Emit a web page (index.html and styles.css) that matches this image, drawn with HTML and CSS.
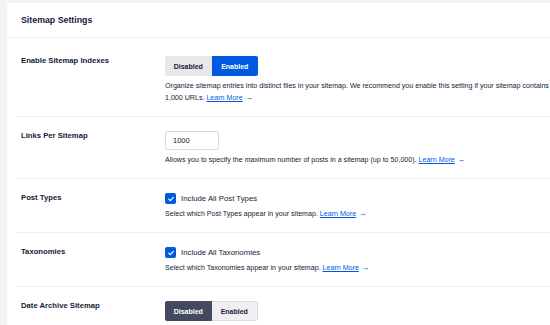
FILE: index.html
```html
<!DOCTYPE html>
<html>
<head>
<meta charset="utf-8">
<link rel="stylesheet" href="styles.css">
</head>
<body>
<div class="page">
  <div class="card">
    <div class="card-header">Sitemap Settings</div>
    <div class="card-body">
      <div class="row">
        <div class="label">Enable Sitemap Indexes</div>
        <div class="field">
          <div class="toggle">
            <span class="btn btn-off">Disabled</span><span class="btn btn-blue">Enabled</span>
          </div>
          <p class="desc desc-wide">Organize sitemap entries into distinct files in your sitemap. We recommend you enable this setting if your sitemap contains <span class="more-wrap">1,000 URLs. <a class="more" href="#">Learn More</a><span class="arrow">→</span></span></p>
        </div>
      </div>
      <div class="row">
        <div class="label">Links Per Sitemap</div>
        <div class="field">
          <div class="input">1000</div>
          <p class="desc">Allows you to specify the maximum number of posts in a sitemap (up to 50,000). <span class="more-wrap"><a class="more" href="#">Learn More</a><span class="arrow">→</span></span></p>
        </div>
      </div>
      <div class="row">
        <div class="label">Post Types</div>
        <div class="field">
          <div class="check-line"><span class="checkbox"><svg viewBox="0 0 10 10" width="8" height="8"><path d="M2.2 5.2 L4.2 7.1 L7.9 3" fill="none" stroke="#fff" stroke-width="1.5" stroke-linecap="round" stroke-linejoin="round"/></svg></span>Include All Post Types</div>
          <p class="desc">Select which Post Types appear in your sitemap. <span class="more-wrap"><a class="more" href="#">Learn More</a><span class="arrow">→</span></span></p>
        </div>
      </div>
      <div class="row">
        <div class="label">Taxonomies</div>
        <div class="field">
          <div class="check-line"><span class="checkbox"><svg viewBox="0 0 10 10" width="8" height="8"><path d="M2.2 5.2 L4.2 7.1 L7.9 3" fill="none" stroke="#fff" stroke-width="1.5" stroke-linecap="round" stroke-linejoin="round"/></svg></span>Include All Taxonomies</div>
          <p class="desc">Select which Taxonomies appear in your sitemap. <span class="more-wrap"><a class="more" href="#">Learn More</a><span class="arrow">→</span></span></p>
        </div>
      </div>
      <div class="row">
        <div class="label">Date Archive Sitemap</div>
        <div class="field">
          <div class="toggle">
            <span class="btn btn-dark">Disabled</span><span class="btn btn-light">Enabled</span>
          </div>
        </div>
      </div>
    </div>
  </div>
</div>
</body>
</html>
```
FILE: styles.css
```css
html, body {
  margin: 0;
  padding: 0;
}
body {
  background: #f2f3f5;
  font-family: "Liberation Sans", Arial, sans-serif;
  color: #141b38;
  overflow: hidden;
  width: 550px;
  height: 325px;
}
.page {
  padding: 3px 0 0 7px;
  height: 322px;
  overflow: hidden;
}
.card {
  background: #fff;
  height: 322px;
}
.card-header {
  height: 34px;
  line-height: 34px;
  padding-left: 14px;
  font-size: 8.8px;
  font-weight: bold;
  border-bottom: 1px solid #eceef1;
}
.card-body {
  padding: 4px 0 0 9px;
}
.row {
  display: flex;
  padding: 14px 0 12px 5px;
  border-top: 1px solid #eceef1;
}
.row:first-child {
  border-top: none;
}
.label {
  width: 144px;
  flex: none;
  font-size: 7.7px;
  font-weight: bold;
  line-height: 10px;
}
.field {
  display: flex;
  flex-direction: column;
  align-items: flex-start;
  min-width: 0;
}
.toggle {
  display: flex;
  height: 20px;
  border-radius: 2px;
  overflow: hidden;
}
.btn {
  width: 46.5px;
  display: flex;
  align-items: center;
  justify-content: center;
  font-size: 7px;
  font-weight: bold;
  box-sizing: border-box;
}
.btn-off {
  background: #e8e8eb;
  color: #141b38;
}
.btn-blue {
  background: #005ae0;
  color: #fff;
}
.btn-dark {
  background: #434960;
  color: #fff;
}
.btn-light {
  background: #f0f0f2;
  color: #141b38;
  border: 1px solid #dcdde1;
  border-left: none;
  border-radius: 0 2px 2px 0;
}
.desc {
  margin: 4px 0 0;
  font-size: 7.1px;
  line-height: 12px;
  white-space: nowrap;
}
.desc-wide {
  width: 400px;
  white-space: normal;
}
.more-wrap {
  white-space: nowrap;
}
.more {
  color: #005ae0;
  text-decoration: underline;
}
.arrow {
  color: #005ae0;
  font-size: 7.5px;
  margin-left: 3px;
}
.input {
  width: 54px;
  height: 19px;
  box-sizing: border-box;
  border: 1px solid #d8dadf;
  border-radius: 2px;
  padding-left: 7px;
  font-size: 7.5px;
  line-height: 17px;
}
.check-line {
  display: flex;
  align-items: center;
  height: 11px;
  font-size: 7.8px;
}
.checkbox {
  width: 11px;
  height: 11px;
  border-radius: 2px;
  background: #005ae0;
  display: flex;
  align-items: center;
  justify-content: center;
  margin-right: 5px;
}
```
